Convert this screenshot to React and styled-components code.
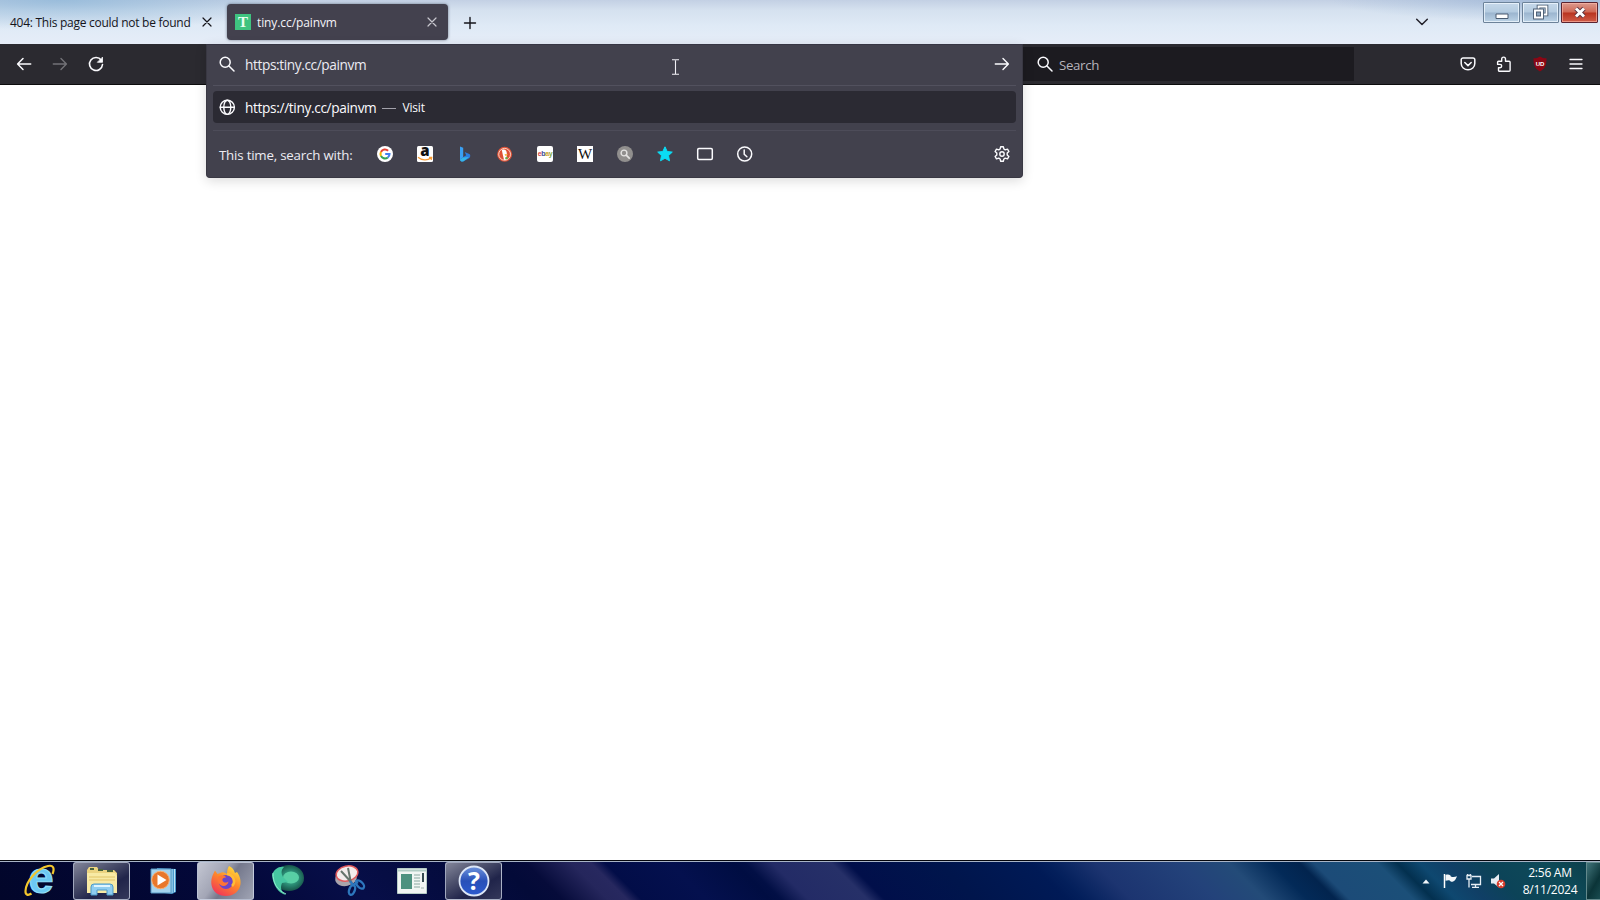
import React from 'react';
import styled, { createGlobalStyle } from 'styled-components';

const Global = createGlobalStyle`
  * { box-sizing: border-box; }
  body { margin: 0; background: #fff; overflow: hidden; font-family: "Open Sans", "Noto Sans", sans-serif; }
  svg { display: block; flex: none; overflow: visible; }
`;

const Desktop = styled.div`
  width: 1600px; height: 900px; display: flex; flex-direction: column; position: relative; background: #fff;
`;

/* ---------- tab strip ---------- */
const TabStrip = styled.header`
  height: 44px; flex: none; display: flex; padding-left: 10px;
  background:
    radial-gradient(ellipse 240px 30px at 60px 0, rgba(140,182,216,.75), rgba(140,182,216,0)),
    radial-gradient(ellipse 230px 22px at 1560px 0, rgba(140,170,208,.6), rgba(140,170,208,0)),
    linear-gradient(#c3d0e4 0, #d5e1ef 10px, #dfeaf6 26px, #e6edf8 44px);
`;
const Tab = styled.div`
  height: 36px; margin-top: 4px; flex: none; display: flex; align-items: center; border-radius: 4px;
  width: ${p => (p.$active ? 221 : 204)}px;
  margin-left: ${p => (p.$active ? 13 : 0)}px;
  padding: ${p => (p.$active ? '0 11px 0 8px' : '0 2px 0 0')};
  color: ${p => (p.$active ? '#f4f3f8' : '#15141a')};
  background: ${p => (p.$active ? '#43414e' : 'transparent')};
  box-shadow: ${p => (p.$active ? '0 0 3px rgba(60,70,90,.7)' : 'none')};
`;
const TabTitle = styled.span`
  flex: 1; font-size: 12px; line-height: 18px; white-space: nowrap; padding-top: 1px;
  letter-spacing: ${p => p.$track || 0}px;
`;
const Favicon = styled.span`
  width: 16px; height: 16px; margin-right: 6px; background: #3fc380; color: #eafff2;
  display: flex; align-items: center; justify-content: center;
  font: bold 15px/16px "Liberation Serif", serif;
`;
const NewTab = styled.div`
  width: 44px; height: 44px; display: flex; align-items: center; justify-content: center; color: #15141a; padding-top: 1px;
`;
const TabList = styled.div`
  margin-left: auto; width: 40px; display: flex; align-items: center; justify-content: center; color: #23222b;
`;
const WindowButtons = styled.div`
  display: flex; gap: 2px; padding: 2px 2px 0 41px;
`;
const WindowButton = styled.div`
  width: 37px; height: 21px; display: flex; align-items: center; justify-content: center;
  border: 1px solid ${p => (p.$close ? '#5b2430' : '#6c8299')};
  border-radius: 1px;
  box-shadow: inset 0 0 0 1px ${p => (p.$close ? 'rgba(255,190,175,.6)' : 'rgba(240,248,255,.75)')};
  background: ${p => (p.$close
    ? 'linear-gradient(#dc9a8e 0, #cf6855 9px, #b93420 10px, #d2604c 20px)'
    : 'linear-gradient(#c6d8ea 0, #b4cbe0 9px, #9bb5cf 10px, #bed5e8 20px)')};
`;

/* ---------- navigation toolbar ---------- */
const Toolbar = styled.nav`
  height: 41px; flex: none; display: flex; align-items: center; background: #2b2a30; border-bottom: 1px solid #0c0c0d;
  color: #fbfbfe; padding: 0 6px;
`;
const ToolButton = styled.div`
  width: 36px; height: 36px; display: flex; align-items: center; justify-content: center;
  opacity: ${p => (p.$disabled ? 0.34 : 1)};
`;
const SearchBox = styled.div`
  margin-left: 905px; width: 335px; height: 34px; background: #1c1b20; display: flex; align-items: center;
  padding-left: 18px; gap: 6px; font-size: 13.3px; color: #fbfbfe;
`;
const SearchText = styled.span`padding-top: 1px; letter-spacing: -.35px; color: #b5b4bb;`;
const ToolEnd = styled.div`margin-left: auto; display: flex;`;

/* ---------- address bar with suggestions ---------- */
const UrlPopup = styled.section`
  position: absolute; left: 206px; top: 44px; width: 817px; height: 134px; background: #42414d; color: #fbfbfe;
  border-radius: 0 0 4px 4px; border: 1px solid #393843; border-top-color: #373644;
  box-shadow: 0 3px 12px rgba(0,0,0,.14); padding: 0 6px; display: flex; flex-direction: column;
`;
const UrlInput = styled.div`
  height: 41px; flex: none; display: flex; align-items: center; padding: 0 6px 2px 6px; border-bottom: 1px solid #52515e;
`;
const UrlText = styled.span`
  font-size: 13.700px; line-height: 20px; margin-left: 10px; padding-top: 2px; white-space: nowrap; color: ${p => p.$color || '#ecebf2'};
  letter-spacing: ${p => p.$track || 0}px;
`;
const Push = styled.span`margin-left: auto;`;
const Result = styled.div`
  height: 32px; margin-top: 5px; flex: none; background: #2b2a33; border-radius: 4px; display: flex; align-items: center;
  padding-left: 6px;
`;
const Dash = styled.span`width: 14px; height: 1px; margin: 3px 6px 0 6px; background: #a2a1aa;`;
const Action = styled.span`font-size: 12px; letter-spacing: -.15px; padding-top: 1px;`;
const OneOffs = styled.div`
  flex: 1; margin-top: 7px; border-top: 1px solid #4d4c59; display: flex; align-items: center; padding: 0 6px 0 6px;
`;
const OneOffLabel = styled.span`
  width: 158px; font-size: 13.3px; letter-spacing: -.2px; white-space: nowrap; color: #ecebf2; padding-top: 2px;
`;
const Engines = styled.div`display: flex; gap: 24px;`;
const Tile = styled.span`
  width: 16px; height: 16px; display: flex; align-items: center; justify-content: center; background: #fff; color: #111;
  border-radius: ${p => p.$radius || 0}px; font: ${p => p.$font}; letter-spacing: ${p => p.$track || 0}px;
`;
const EbayLetter = styled.span`color: ${p => p.$c};`;
const Pointer = styled.div`position: absolute; left: 671px; top: 59px;`;

const Page = styled.main`flex: 1;`;

/* ---------- taskbar ---------- */
const Taskbar = styled.footer`
  height: 40px; flex: none; border-top: 1px solid #05070d; box-shadow: inset 0 1px 0 #a8b4c6; display: flex;
  padding: 1px 0 0 11px; color: #fff;
  background: linear-gradient(45deg,
    #02062a 0, #03083a 180px, #070e48 260px, #030a38 380px,
    #060b3a 398px, #25265c 430px, #27285f 444px, #020d48 454px, #04104e 500px, #000d42 545px,
    #020f45 553px, #232b66 572px, #263068 614px, #010f4a 626px, #00154c 690px, #001a56 755px,
    #04205c 768px, #1c3470 800px, #23427a 860px, #234b78 895px, #032a58 925px, #02244e 945px,
    #1c4b78 955px, #1b4f78 1000px, #03304f 1014px, #0e4870 1030px, #103f66 1050px, #0c4358 1075px,
    #0e4a58 1120px, #0a3a45 1160px);
`;
const Task = styled.div`
  width: 57px; height: 38px; margin-right: 5px; flex: none; display: flex; align-items: center; justify-content: center;
  border: 1px solid ${p => (p.$state ? 'rgba(200,208,225,.75)' : 'transparent')}; border-radius: 3px;
  background: ${p => (p.$state === 'active'
    ? 'linear-gradient(125deg, #c3c6d2 0, #a3a6b6 38%, #74788c 54%, #a0a4b4 100%)'
    : p.$state === 'open' ? 'linear-gradient(150deg, #83869a 0, #4c506c 35%, #20244a 65%, #34385a 100%)' : 'none')};
`;
const Tray = styled.div`margin-left: auto; display: flex; align-items: center;`;
const Expander = styled.span`margin-right: 5px;`;
const TrayIcons = styled.div`display: flex; align-items: center; gap: 8px;`;
const Clock = styled.div`
  width: 72px; margin-left: 8px; text-align: center; font-size: 12px; line-height: 17px; letter-spacing: -.25px; white-space: nowrap;
`;
const ShowDesktop = styled.div`
  width: 14px; height: 38px; border: 1px solid #63898c; border-right: 0;
  background: linear-gradient(120deg, #41747a, #0b3438 60%, #194c50);
`;

const Line = ({ size = 16, w = 1.4, children, box = 16 }) => (
  <svg width={size} height={size} viewBox={`0 0 ${box} ${box}`} fill="none" stroke="currentColor" strokeWidth={w}
    strokeLinecap="round" strokeLinejoin="round">{children}</svg>
);
const Cross = ({ c }) => <Line size={10} box={10} w={1.2}><path stroke={c} d="M1 1l8 8M9 1l-8 8" /></Line>;
const Magnifier = () => <Line w={1.5}><circle cx="6.2" cy="6.2" r="5" /><path d="M10 10l5 5" /></Line>;
const ArrowRight = () => <Line><path d="M1.3 8h13M9 2.500l5.400 5.500L9 13.500" /></Line>;
const ArrowLeft = () => <Line w={1.5}><path d="M14.700 8h-13M7 2.500L1.600 8 7 13.500" /></Line>;
const Reload = () => (
  <Line w={1.6}><path d="M13.300 4.200A6.500 6.500 0 1 0 14.500 8.500" /><path d="M14.500 1.500v4.800H9.700z" fill="currentColor" strokeWidth=".8" /></Line>
);
const Globe = () => (
  <Line w={1.4}><circle cx="8.300" cy="8.300" r="7.100" /><ellipse cx="8.300" cy="8.300" rx="3.500" ry="7.100" /><path d="M1.300 8.300h14" /></Line>
);
const Pocket = () => (
  <Line w={1.5}><path d="M3 2h10a1.800 1.800 0 0 1 1.800 1.800V7.500a6.800 6.300 0 0 1-13.600 0V3.800A1.800 1.800 0 0 1 3 2z" /><path d="M4.800 6.500L8 9.600l3.200-3.100" /></Line>
);
const Puzzle = () => (
  <Line w={1.4}><path d="M2.500 5.200h3.200V3a1.900 1.900 0 0 1 3.800 0v2.200h3.600a1 1 0 0 1 1 1v8a1 1 0 0 1-1 1H3.500a1 1 0 0 1-1-1v-2.400H4a1.700 1.700 0 0 0 0-3.400H1.600V6.200a1 1 0 0 1 .9-1z" /></Line>
);
const Shield = () => (
  <svg width="16" height="16" viewBox="0 0 16 16">
    <path d="M8 0.500c2 1.500 4.500 1.900 6.500 1.800 0 6.500-1 10.200-6.500 13.300C2.500 12.500 1.500 8.800 1.500 2.300 3.500 2.400 6 2 8 .5z" fill="#8b0614" />
    <text x="8" y="9.800" fontFamily="Liberation Sans, sans-serif" fontWeight="bold" fontSize="6" fill="#fff" textAnchor="middle">UD</text>
  </svg>
);
const Menu = () => <Line w={1.3}><path d="M2 3.500h12M2 8h12M2 12.500h12" /></Line>;
const Gear = () => (
  <Line w={1.4}><circle cx="8" cy="8" r="2.200" /><path d="M6.700 .7h2.600l.6 2.300 1.300.8 2.300-.7 1.400 2.400-1.700 1.600v1.800l1.700 1.600-1.400 2.400-2.300-.7-1.300.8-.6 2.300H6.700L6.100 13l-1.300-.8-2.300.7-1.400-2.400 1.700-1.600V7.100L1.100 5.500l1.400-2.400 2.300.7L6.100 3z" /></Line>
);
const Google = () => (
  <svg width="16" height="16" viewBox="0 0 16 16" fill="none" strokeWidth="2.100">
    <circle cx="8" cy="8" r="8" fill="#fff" />
    <path d="M11.100 4.700A4.500 4.500 0 0 0 4 5.900" stroke="#e74335" />
    <path d="M4 5.900a4.500 4.500 0 0 0 0 4.200" stroke="#f6b705" />
    <path d="M4 10.100a4.500 4.500 0 0 0 6.800 1.400" stroke="#34a353" />
    <path d="M10.800 11.500A4.500 4.500 0 0 0 12.500 8H8.200" stroke="#4280ef" />
  </svg>
);
const Amazon = () => (
  <svg width="16" height="16" viewBox="0 0 16 16">
    <rect width="16" height="16" rx="1.500" fill="#fff" />
    <text x="8" y="9.800" textAnchor="middle" fontFamily="Open Sans, sans-serif" fontWeight="800" fontSize="15" fill="#111">a</text>
    <path d="M1 11.200c4 3.500 9.500 3.500 13 .9M12 11.500l2.700-.1-.5 2.600" stroke="#f79b34" strokeWidth="1.300" fill="none" />
  </svg>
);
const Bing = () => (
  <svg width="16" height="16" viewBox="0 0 16 16">
    <path d="M3 .5l3.200 1.300v9.700L3 13.600z" fill="#3aa0f4" />
    <path d="M3 13.500l3-2.200 3.200-2-1.500-3.200 4.600 1.800c1.400.7 1.300 3.300-.3 4.300l-5.400 3.100c-1.700.8-3.600-.2-3.600-1.800z" fill="#2b7de0" />
    <path d="M3 13.500l3-2 6-.6-5.400 4.400c-1.700.8-3.600-.2-3.600-1.800z" fill="#36b5e8" />
  </svg>
);
const Duck = () => (
  <svg width="16" height="16" viewBox="0 0 16 16">
    <circle cx="7.600" cy="8.300" r="7.500" fill="#dd5237" /><circle cx="7.600" cy="8.300" r="5.900" fill="none" stroke="#ffe2d6" strokeWidth=".9" />
    <path d="M4.800 4c2.800-1.300 5 .2 5 3.200l-.4 6.300-2.300.6C6.100 10.900 5.600 7.400 4.800 4z" fill="#fff" />
    <path d="M7.600 8l3.500.6-2.800 1.300z" fill="#f5b82e" /><path d="M8.100 11.400l2.500-.7v2.500l-2.500-.5z" fill="#61b34b" />
  </svg>
);
const GraySearch = () => (
  <svg width="16" height="16" viewBox="0 0 16 16" fill="none" stroke="#e4e3e2">
    <circle cx="8" cy="8" r="8" fill="#918f8e" stroke="none" /><circle cx="7" cy="7" r="2.900" strokeWidth="1.400" />
    <path d="M9.200 9.200l3 3" strokeWidth="1.700" strokeLinecap="round" />
  </svg>
);
const Star = () => (
  <svg width="16" height="16" viewBox="0 0 16 16"><path d="M8 .8l2.200 4.700 5.100.6-3.800 3.500 1 5.200L8 12.300l-4.500 2.500 1-5.200L.7 6.100l5.100-.6z" fill="#0adcf5" stroke="#0adcf5" strokeLinejoin="round" /></svg>
);
const TabsIcon = () => <Line w={1.500}><rect x=".7" y="2.500" width="14.600" height="11" rx="1.200" /></Line>;
const History = () => <Line w={1.500}><circle cx="7.700" cy="8" r="7" /><path d="M7.200 4v4.200l2.700 2.600" /></Line>;

const IE = () => (
  <svg width="34" height="34" viewBox="0 0 34 34">
    <text x="18" y="29" textAnchor="middle" fontFamily="Liberation Sans, sans-serif" fontWeight="bold" fontSize="45" fill="#6cc9f3" stroke="#8fdcf8" strokeWidth="1.200">e</text>
    <path d="M29.500 10C32 4 30 .8 25 2 14 4.500 3 17 2.500 27c-.2 4 2.500 4.800 6 2.500" fill="none" stroke="#f3c62c" strokeWidth="2.200" />
  </svg>
);
const Explorer = () => (
  <svg width="34" height="34" viewBox="0 0 34 34">
    <path d="M2 6l2-3h8l2 3h15l3 3v20H2z" fill="#ecd481" /><path d="M5 5h4M13 6h5M22 7h6" stroke="#49633b" strokeWidth="1.800" />
    <path d="M2 9h28l2 3v17H2z" fill="#f8eaa5" /><path d="M4 13h26M4 16h26" stroke="#e1c468" />
    <path d="M6 31v-8q0-3 3-3h16q3 0 3 3v8h-6v-5H12v5z" fill="#8fcdf0" stroke="#4d9ac9" /><path d="M9 22h16" stroke="#dff5ff" strokeWidth="2" />
  </svg>
);
const MediaPlayer = () => (
  <svg width="28" height="28" viewBox="0 0 28 28">
    <path d="M7 1l19 1v23l-4 2L7 25z" fill="#4b9bce" /><path d="M22 2v24M24.500 2v23" stroke="#bce4f7" />
    <path d="M1 2h20v24H1z" fill="#a4d3ee" stroke="#5698c4" /><circle cx="10.500" cy="13" r="8.800" fill="#e8772b" stroke="#f6b279" />
    <path d="M7.500 7.500l9 5.500-9 5.500z" fill="#fff" />
  </svg>
);
const Firefox = () => (
  <svg width="32" height="32" viewBox="0 0 32 32">
    <defs><linearGradient id="fox" x1=".8" y1="0" x2=".2" y2="1"><stop offset="0" stopColor="#ffe23e" /><stop offset=".45" stopColor="#ff8b28" /><stop offset="1" stopColor="#f0305c" /></linearGradient></defs>
    <path d="M19 1c4 1.500 5 4.500 6 7l2-1c8 11 2 24-11 24C3 31-2 19 3.500 8.500L5 5.500 7.500 9l4-1.500c2-.5 4 .5 5.500 1.500 0-3 .5-6 2-8z" fill="url(#fox)" />
    <circle cx="16" cy="17" r="7" fill="#6b45c9" /><path d="M8 12c3-2 7-2 8 .5-3 0-4 1.500-3.500 3 1 3 5 2 6 1-1 6-9 6-10.500-.5z" fill="#ff7434" />
    <path d="M17 9c7 1 9 8 5 12" fill="none" stroke="#ffbd36" strokeWidth="2.500" />
  </svg>
);
const GreenOrb = () => (
  <svg width="34" height="34" viewBox="0 0 34 34">
    <defs><radialGradient id="orb" cx=".55" cy=".5"><stop offset="0" stopColor="#55c5a0" /><stop offset=".55" stopColor="#2a8a73" /><stop offset="1" stopColor="#175348" /></radialGradient></defs>
    <ellipse cx="18" cy="14" rx="15" ry="13" fill="url(#orb)" /><ellipse cx="20" cy="13.500" rx="8" ry="6" fill="#58cfa5" />
    <path d="M1 11c2-6 7-9 12-8-3 3-3 6-1 10l5 5-6 1c-2 5-1 8 4 12C7 29 2 21 1 11z" fill="#46c6a1" /><path d="M2 9c0 10 4 17 13 21" stroke="#8ce9cb" fill="none" />
  </svg>
);
const Snip = () => (
  <svg width="32" height="34" viewBox="0 0 32 34">
    <ellipse cx="12" cy="14" rx="11" ry="8" fill="#a9a4ab" transform="rotate(-12 12 14)" />
    <ellipse cx="13" cy="9.500" rx="11" ry="7.500" fill="#f2ecec" stroke="#df5a5d" strokeWidth="1.500" transform="rotate(-12 13 9.500)" />
    <path d="M7 7l11 12M14 4l3 15" stroke="#65746c" strokeWidth="2" />
    <g fill="none" stroke="#2d77bd" strokeWidth="2.400"><path d="M16 17l3 4 5-3" /><ellipse cx="18" cy="26" rx="2.800" ry="5" transform="rotate(20 18 26)" /><ellipse cx="26" cy="20.500" rx="2.800" ry="5" transform="rotate(-45 26 20.500)" /></g>
  </svg>
);
const Panel = () => (
  <svg width="30" height="26" viewBox="0 0 30 26">
    <path d="M.5.5h29v25H.5z" fill="#f1f5f3" stroke="#b7cdc7" /><path d="M1 2.500h28" stroke="#b1ccc4" strokeWidth="2" />
    <path d="M4 6h11v15H4z" fill="#4e9280" /><path d="M17 7h6M17 10h6M17 13h6M17 16h6M17 19h6" stroke="#8aa7a0" /><path d="M26 5v9" stroke="#354a50" strokeWidth="2" /><path d="M24 20h3" stroke="#9db3ac" />
  </svg>
);
const Help = () => (
  <svg width="32" height="32" viewBox="0 0 32 32">
    <defs><linearGradient id="help" x1="0" y1="0" x2="0" y2="1"><stop offset="0" stopColor="#6e93dc" /><stop offset=".5" stopColor="#2850b8" /><stop offset="1" stopColor="#2d5bcf" /></linearGradient></defs>
    <circle cx="16" cy="16" r="14.500" fill="url(#help)" stroke="#dce6f6" strokeWidth="1.800" />
    <text x="16" y="24.500" textAnchor="middle" fontFamily="Open Sans, sans-serif" fontWeight="bold" fontSize="25" fill="#fff">?</text>
  </svg>
);
const Flag = () => (
  <svg width="15" height="16" viewBox="0 0 15 16"><path d="M1.500 1v14" stroke="#fff" strokeWidth="1.500" /><path d="M2.500 2c2-.8 3.500-.6 5 .4l.3 1c2 .8 4 .6 6.200-.2-1 2.500-2 5-4.500 5.500-1.500.1-2.500-.5-3-1.500C5.200 7 4 7.200 2.500 7.800z" fill="#f2f6fa" /></svg>
);
const Network = () => (
  <svg width="16" height="16" viewBox="0 0 16 16" fill="none" stroke="#e7eef5" strokeWidth="1.300"><path d="M6 3.500h8.500v8h-9.500M6 14.300h7M9.500 11.500v3" /><path d="M1 2.500h4v3.500H1zM3 6v8.500M1.700 1v1.500M4.300 1v1.500" /></svg>
);
const Muted = () => (
  <svg width="16" height="16" viewBox="0 0 16 16"><path d="M1 5.500h3l5-4.500v13.500l-5-4H1z" fill="#e7edf3" /><circle cx="11" cy="11" r="4.300" fill="#d83c2c" /><path d="M9 9l4 4M13 9l-4 4" stroke="#fff" strokeWidth="1.300" /></svg>
);

const tasks = [
  [IE], [Explorer, 'open'], [MediaPlayer], [Firefox, 'active'], [GreenOrb], [Snip], [Panel], [Help, 'open'],
];

export default function App() {
  return (
    <Desktop>
      <Global />
      <TabStrip>
        <Tab>
          <TabTitle $track={-0.27}>404: This page could not be found</TabTitle>
          <Cross />
        </Tab>
        <Tab $active>
          <Favicon>T</Favicon>
          <TabTitle $track={-0.1}>tiny.cc/painvm</TabTitle>
          <Cross c="#c8c7ce" />
        </Tab>
        <NewTab><Line size={12} box={12} w={1.4}><path d="M6 .5v11M.5 6h11" /></Line></NewTab>
        <TabList><Line size={12} box={12} w={1.500}><path d="M.7 3.200L6 8.500l5.300-5.300" /></Line></TabList>
        <WindowButtons>
          <WindowButton><svg width="14" height="14" viewBox="0 0 14 14"><path d="M1 8h12v4.500H1z" fill="#fff" stroke="#4a5b70" /></svg></WindowButton>
          <WindowButton><svg width="15" height="15" viewBox="0 0 15 15"><path d="M5.500 1.500h8v8h-8z" fill="none" stroke="#4a5b70" strokeWidth="3.600" /><path d="M5.500 1.500h8v8h-8z" fill="none" stroke="#fff" strokeWidth="1.800" /><path d="M2 5.500h7v7H2z" fill="#8da6bf" stroke="#4a5b70" strokeWidth="3.800" /><path d="M2 5.500h7v7H2z" fill="none" stroke="#fff" strokeWidth="2" /></svg></WindowButton>
          <WindowButton $close><svg width="12" height="11" viewBox="0 0 12 11"><path d="M2 1.500l8 8M10 1.500l-8 8" stroke="#5b3440" strokeWidth="4.600" /><path d="M2 1.500l8 8M10 1.500l-8 8" stroke="#fff" strokeWidth="2.900" /></svg></WindowButton>
        </WindowButtons>
      </TabStrip>

      <Toolbar>
        <ToolButton><ArrowLeft /></ToolButton>
        <ToolButton $disabled><ArrowRight /></ToolButton>
        <ToolButton><Reload /></ToolButton>
        <SearchBox><Magnifier /><SearchText>Search</SearchText></SearchBox>
        <ToolEnd>
          <ToolButton><Pocket /></ToolButton>
          <ToolButton><Puzzle /></ToolButton>
          <ToolButton><Shield /></ToolButton>
          <ToolButton><Menu /></ToolButton>
        </ToolEnd>
      </Toolbar>

      <Page />

      <UrlPopup>
        <UrlInput>
          <Magnifier />
          <UrlText $track={-0.4}>https:tiny.cc/painvm</UrlText>
          <Push><ArrowRight /></Push>
        </UrlInput>
        <Result>
          <Globe />
          <UrlText $track={-0.36} $color="#fbfbfe">https://tiny.cc/painvm</UrlText>
          <Dash />
          <Action>Visit</Action>
        </Result>
        <OneOffs>
          <OneOffLabel>This time, search with:</OneOffLabel>
          <Engines>
            <Google />
            <Amazon />
            <Bing />
            <Duck />
            <Tile $radius={2} $font='bold 7px/16px "Liberation Sans", sans-serif' $track={-0.4}>
              <EbayLetter $c="#d64545">e</EbayLetter><EbayLetter $c="#3c4c98">b</EbayLetter>
              <EbayLetter $c="#d0a22c">a</EbayLetter><EbayLetter $c="#84a83a">y</EbayLetter>
            </Tile>
            <Tile $font='15px/16px "Liberation Serif", serif'>W</Tile>
            <GraySearch />
            <Star />
            <TabsIcon />
            <History />
          </Engines>
          <Push><Gear /></Push>
        </OneOffs>
      </UrlPopup>
      <Pointer>
        <svg width="9" height="16" viewBox="0 0 9 16" fill="none"><path d="M1 .8h3l.5.500.5-.500h3M4.500 1.300v13.400M1 15.200h3l.5-.5.5.5h3" stroke="#f1f0f5" strokeWidth="1.100" /></svg>
      </Pointer>

      <Taskbar>
        {tasks.map(([Icon, state], i) => <Task key={i} $state={state}><Icon /></Task>)}
        <Tray>
          <TrayIcons>
            <Expander><svg width="8" height="5" viewBox="0 0 8 5"><path d="M4 .5L7.500 4.500h-7z" fill="#f2f6fa" /></svg></Expander>
            <Flag />
            <Network />
            <Muted />
          </TrayIcons>
          <Clock>2:56 AM<br />8/11/2024</Clock>
          <ShowDesktop />
        </Tray>
      </Taskbar>
    </Desktop>
  );
}
